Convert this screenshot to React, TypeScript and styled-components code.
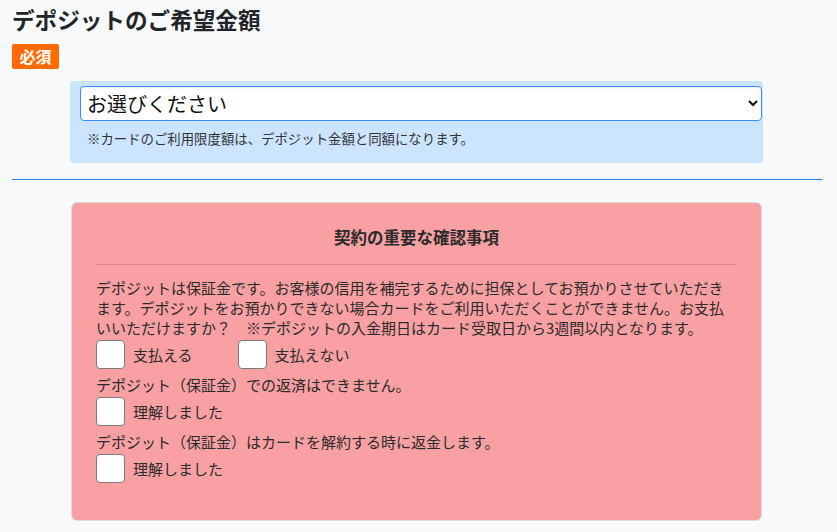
import React from "react";
import styled, { createGlobalStyle } from "styled-components";

const GlobalStyle = createGlobalStyle`
  body {
    margin: 0;
    background: #f8f9fa;
    color: #212529;
    font-family: "Noto Sans CJK JP", "Noto Sans", sans-serif;
  }
`;

const Page = styled.div`
  padding: 6px 15px 0 12px;
`;

const Heading = styled.h2`
  margin: 0;
  font-size: 22.6px;
  line-height: 28px;
  font-weight: 700;
  color: #212529;
`;

const Badge = styled.span`
  display: inline-block;
  margin-top: 10px;
  padding: 0 7.5px;
  height: 25px;
  line-height: 25px;
  background: #ff6a00;
  color: #fff;
  font-size: 16px;
  font-weight: 700;
  border-radius: 2px;
`;

const Inner = styled.div`
  margin: 12px 0 0 58px;
  width: 693px;
`;

const SelectBox = styled.div`
  background: #cce5ff;
  border-radius: 4px;
  padding: 5px 1px 0 10px;
  height: 82px;
  box-sizing: border-box;
`;

const Select = styled.select`
  display: block;
  width: 100%;
  height: 35px;
  padding: 0 6px 0 2px;
  font-family: "Noto Sans CJK JP", sans-serif;
  font-size: 20px;
  color: #111;
  background: #fff;
  border: 1px solid #3a8dfd;
  border-radius: 4px;
  box-shadow: inset 0 1px 2px rgba(0, 0, 0, 0.08);
  outline: none;
`;

const Note = styled.p`
  margin: 7px 0 0 7px;
  font-size: 13.4px;
  line-height: 20px;
  color: #333;
`;

const Rule = styled.div`
  margin-top: 16px;
  height: 1px;
  background: #2680d9;
`;

const Card = styled.div`
  margin: 22px 0 0 59px;
  width: 691px;
  box-sizing: border-box;
  background: #f9a0a3;
  border: 1px solid #dcdcdc;
  border-radius: 6px;
  padding: 22px 24px 31px;
`;

const CardTitle = styled.h3`
  margin: 0;
  text-align: center;
  font-size: 16.5px;
  line-height: 24px;
  font-weight: 700;
  color: #2b2b2b;
`;

const CardRule = styled.div`
  margin: 15px 0 13px;
  border-top: 1px solid #e0898d;
`;

const Text = styled.p`
  margin: 0;
  font-size: 15px;
  line-height: 20px;
  color: #2b2b2b;
`;

const Row = styled.div`
  display: flex;
  align-items: center;
  margin: 2px 0 6px;
`;

const Option = styled.label<{ $gap?: number }>`
  display: flex;
  align-items: center;
  gap: 8px;
  margin-right: ${(p) => p.$gap ?? 0}px;
  font-size: 15px;
  color: #2b2b2b;
`;

const Box = styled.span`
  width: 29px;
  height: 29px;
  box-sizing: border-box;
  background: #fff;
  border: 1px solid #7a7a7a;
  border-radius: 4px;
`;

export default function App() {
  return (
    <Page>
      <GlobalStyle />
      <Heading>デポジットのご希望金額</Heading>
      <Badge>必須</Badge>
      <Inner>
        <SelectBox>
          <Select defaultValue="">
            <option value="">お選びください</option>
          </Select>
          <Note>※カードのご利用限度額は、デポジット金額と同額になります。</Note>
        </SelectBox>
      </Inner>
      <Rule />
      <Card>
        <CardTitle>契約の重要な確認事項</CardTitle>
        <CardRule />
        <Text>
          デポジットは保証金です。お客様の信用を補完するために担保としてお預かりさせていただきます。デポジットをお預かりできない場合カードをご利用いただくことができません。お支払いいただけますか？　※デポジットの入金期日はカード受取日から3週間以内となります。
        </Text>
        <Row>
          <Option $gap={45}>
            <Box />
            支払える
          </Option>
          <Option>
            <Box />
            支払えない
          </Option>
        </Row>
        <Text>デポジット（保証金）での返済はできません。</Text>
        <Row>
          <Option>
            <Box />
            理解しました
          </Option>
        </Row>
        <Text>デポジット（保証金）はカードを解約する時に返金します。</Text>
        <Row>
          <Option>
            <Box />
            理解しました
          </Option>
        </Row>
      </Card>
    </Page>
  );
}
